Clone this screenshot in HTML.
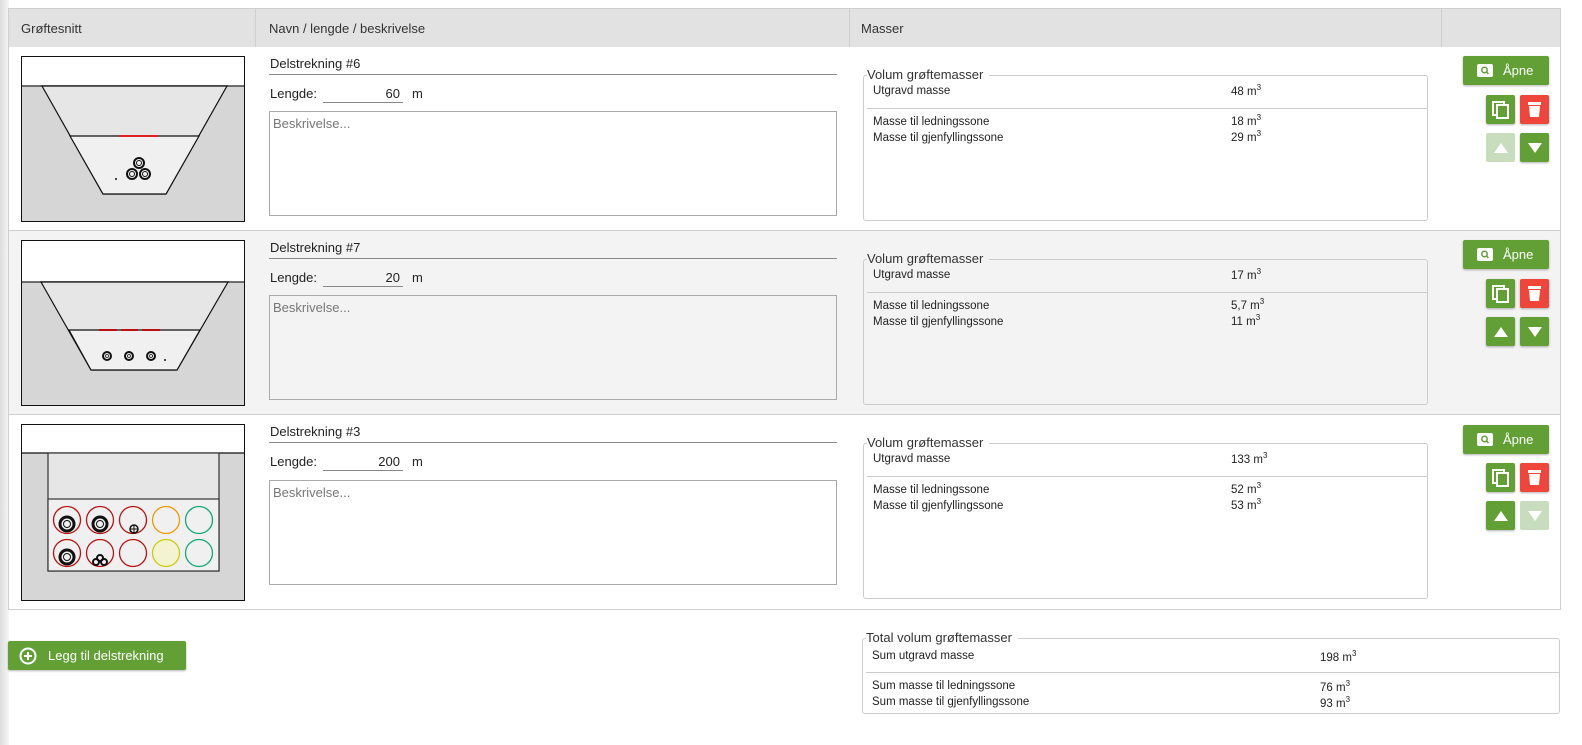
<!DOCTYPE html>
<html><head><meta charset="utf-8">
<style>
*{box-sizing:border-box;margin:0;padding:0}
body{width:1582px;height:745px;position:relative;background:#fff;font-family:"Liberation Sans",sans-serif;color:#222;overflow:hidden}
.strip{position:absolute;left:0;top:0;width:9px;height:745px;background:linear-gradient(to right,#ddd,#f6f6f6)}
.a{position:absolute}
.hdr{left:8px;top:8px;width:1553px;height:40px;background:#e2e2e2;border:1px solid #cfcfcf}
.hdr span{position:absolute;top:12px;font-size:13px;color:#333}
.vl{position:absolute;top:0;width:1px;height:38px;background:#cfcfcf}
.row{position:absolute;left:8px;width:1553px;border-left:1px solid #cfcfcf;border-right:1px solid #cfcfcf;border-bottom:1px solid #cfcfcf}
.img{position:absolute;left:12px;width:224px;border:1px solid #111;background:#d6d6d6;overflow:hidden}
.name{position:absolute;left:260px;width:568px;height:19px;border-bottom:1px solid #888;font-size:13px;color:#222;padding-left:1px}
.lab{position:absolute;left:261px;font-size:13px}
.len{position:absolute;left:314px;width:80px;height:17px;border-bottom:1px solid #888;font-size:13px;text-align:right;padding-right:3px}
.m{position:absolute;left:403px;font-size:13px}
.ta{position:absolute;left:260px;width:568px;border:1px solid #aaa;background:inherit;font-size:13px;color:#777;padding:4px 3px}
.fs{position:absolute;left:854px;width:565px;border:1px solid #ccc;border-radius:3px}
.fs .lg{position:absolute;left:3px;top:-9px;font-size:13px;color:#333;background:inherit;padding-right:6px}
.fs .t{position:absolute;left:9px;font-size:11.5px}
.fs .v{position:absolute;font-size:11.5px}
.fs .hr{position:absolute;left:3px;right:0;height:1px;background:#ccc}
sup{font-size:8px;vertical-align:top;position:relative;top:-3px}
.btn{position:absolute;background:#62a035;border-radius:2px;box-shadow:0 1px 2px rgba(0,0,0,.3)}
.open{left:1454px;width:86px;height:29px;color:#fff;font-size:13px}
.open .q{position:absolute;left:14px;top:8px;width:16px;height:13px;background:#fff;border-radius:2px}
.open span{position:absolute;left:40px;top:7px}
.sq{width:29px;height:29px}
.red{background:#f0453a}
.dis{background:#c8ddbd;box-shadow:none}
.tri-u{position:absolute;left:8px;top:10px;border-left:7px solid transparent;border-right:7px solid transparent;border-bottom:10px solid #fff}
.tri-d{position:absolute;left:8px;top:10px;border-left:7px solid transparent;border-right:7px solid transparent;border-top:10px solid #fff}
</style></head><body>
<div class="strip"></div>
<div class="a hdr">
<span style="left:12px">Grøftesnitt</span><div class="vl" style="left:246px"></div>
<span style="left:260px">Navn / lengde / beskrivelse</span><div class="vl" style="left:840px"></div>
<span style="left:852px">Masser</span><div class="vl" style="left:1432px"></div>
</div>

<!-- Row 1 -->
<div class="row" style="top:47px;height:184px;background:#fff">
<div class="img" style="top:9px;height:166px">
<svg width="224" height="166" viewBox="0 0 224 166">
<rect x="0" y="0" width="224" height="29" fill="#fff"/>
<line x1="0" y1="29" x2="224" y2="29" stroke="#444" stroke-width="1.5"/>
<polygon points="20,29 205,29 144,137 81,137" fill="#e6e6e6" stroke="#111" stroke-width="1.2"/>
<polygon points="48,79 177,79 144,137 81,137" fill="#f0f0f0" stroke="#111" stroke-width="1.2"/>
<line x1="97" y1="79" x2="136" y2="79" stroke="#d22" stroke-width="2"/>
<g fill="none" stroke="#111" stroke-width="2"><circle cx="117" cy="106" r="5"/><circle cx="110" cy="117" r="5"/><circle cx="123" cy="117" r="5"/></g>
<g fill="none" stroke="#111" stroke-width="1"><circle cx="117" cy="106" r="2.5"/><circle cx="110" cy="117" r="2.5"/><circle cx="123" cy="117" r="2.5"/></g>
<circle cx="94" cy="122" r="1" fill="#111"/>
</svg></div>
<div class="name" style="top:9px">Delstrekning #6</div>
<div class="lab" style="top:39px">Lengde:</div><div class="len" style="top:39px">60</div><div class="m" style="top:39px">m</div>
<div class="ta" style="top:64px;height:105px;background:#fff">Beskrivelse...</div>
<div class="fs" style="top:28px;height:146px;background:#fff"><div class="lg">Volum grøftemasser</div>
<div class="t" style="top:9px">Utgravd masse</div><div class="v" style="left:367px;top:10px">48 m<sup>3</sup></div>
<div class="hr" style="top:32px"></div>
<div class="t" style="top:40px">Masse til ledningssone</div><div class="v" style="left:367px;top:40px">18 m<sup>3</sup></div>
<div class="t" style="top:56px">Masse til gjenfyllingssone</div><div class="v" style="left:367px;top:56px">29 m<sup>3</sup></div>
</div>
<div class="btn open" style="top:9px"><div class="q"><svg width="16" height="13"><circle cx="7.5" cy="6" r="2.7" fill="none" stroke="#62a035" stroke-width="1.5"/><path d="M9.5 8l2 2" stroke="#62a035" stroke-width="1.5"/></svg></div><span>Åpne</span></div>
<div class="btn sq" style="left:1477px;top:48px"><svg width="29" height="29"><rect x="7" y="7" width="11" height="13" fill="none" stroke="#fff" stroke-width="2"/><rect x="11" y="10" width="11" height="13" fill="#62a035" stroke="#fff" stroke-width="2"/></svg></div>
<div class="btn sq red" style="left:1511px;top:48px"><svg width="29" height="29"><rect x="8" y="7" width="13" height="3" fill="#fff"/><path d="M9 11h11l-1 11h-9z" fill="#fff"/></svg></div>
<div class="btn sq dis" style="left:1477px;top:86px"><div class="tri-u"></div></div>
<div class="btn sq" style="left:1511px;top:86px"><div class="tri-d"></div></div>
</div>

<!-- Row 2 -->
<div class="row" style="top:231px;height:184px;background:#f3f3f3">
<div class="img" style="top:9px;height:166px">
<svg width="224" height="166" viewBox="0 0 224 166">
<rect x="0" y="0" width="224" height="41" fill="#fff"/>
<line x1="0" y1="41" x2="224" y2="41" stroke="#444" stroke-width="1.5"/>
<polygon points="19,41 206,41 155,129 69,129" fill="#e6e6e6" stroke="#111" stroke-width="1.2"/>
<polygon points="47,89 178,89 155,129 69,129" fill="#f0f0f0" stroke="#111" stroke-width="1.2"/>
<g stroke="#b11" stroke-width="2"><line x1="77" y1="89" x2="95" y2="89"/><line x1="99" y1="89" x2="116" y2="89"/><line x1="120" y1="89" x2="138" y2="89"/></g>
<g fill="none" stroke="#111" stroke-width="2"><circle cx="85" cy="115" r="4"/><circle cx="107" cy="115" r="4"/><circle cx="129" cy="115" r="4"/></g>
<g fill="none" stroke="#111" stroke-width="0.8"><circle cx="85" cy="115" r="1.5"/><circle cx="107" cy="115" r="1.5"/><circle cx="129" cy="115" r="1.5"/></g>
<circle cx="143" cy="119" r="1" fill="#111"/>
</svg></div>
<div class="name" style="top:9px">Delstrekning #7</div>
<div class="lab" style="top:39px">Lengde:</div><div class="len" style="top:39px">20</div><div class="m" style="top:39px">m</div>
<div class="ta" style="top:64px;height:105px;background:#f3f3f3">Beskrivelse...</div>
<div class="fs" style="top:28px;height:146px;background:#f3f3f3"><div class="lg">Volum grøftemasser</div>
<div class="t" style="top:9px">Utgravd masse</div><div class="v" style="left:367px;top:10px">17 m<sup>3</sup></div>
<div class="hr" style="top:32px"></div>
<div class="t" style="top:40px">Masse til ledningssone</div><div class="v" style="left:367px;top:40px">5,7 m<sup>3</sup></div>
<div class="t" style="top:56px">Masse til gjenfyllingssone</div><div class="v" style="left:367px;top:56px">11 m<sup>3</sup></div>
</div>
<div class="btn open" style="top:9px"><div class="q"><svg width="16" height="13"><circle cx="7.5" cy="6" r="2.7" fill="none" stroke="#62a035" stroke-width="1.5"/><path d="M9.5 8l2 2" stroke="#62a035" stroke-width="1.5"/></svg></div><span>Åpne</span></div>
<div class="btn sq" style="left:1477px;top:48px"><svg width="29" height="29"><rect x="7" y="7" width="11" height="13" fill="none" stroke="#fff" stroke-width="2"/><rect x="11" y="10" width="11" height="13" fill="#62a035" stroke="#fff" stroke-width="2"/></svg></div>
<div class="btn sq red" style="left:1511px;top:48px"><svg width="29" height="29"><rect x="8" y="7" width="13" height="3" fill="#fff"/><path d="M9 11h11l-1 11h-9z" fill="#fff"/></svg></div>
<div class="btn sq" style="left:1477px;top:86px"><div class="tri-u"></div></div>
<div class="btn sq" style="left:1511px;top:86px"><div class="tri-d"></div></div>
</div>

<!-- Row 3 -->
<div class="row" style="top:415px;height:195px;background:#fff">
<div class="img" style="top:9px;height:177px">
<svg width="224" height="177" viewBox="0 0 224 177">
<rect x="0" y="0" width="224" height="28" fill="#fff"/>
<line x1="0" y1="28" x2="224" y2="28" stroke="#111" stroke-width="1.2"/>
<rect x="26" y="28" width="171" height="118" fill="#e6e6e6" stroke="#333" stroke-width="1.2"/>
<rect x="26" y="74" width="171" height="72" fill="#f0f0f0" stroke="#333" stroke-width="1.2"/>
<g fill="none" stroke-width="1.3">
<circle cx="45" cy="95" r="13.5" stroke="#b11"/><circle cx="78" cy="95" r="13.5" stroke="#b11"/><circle cx="111" cy="95" r="13.5" stroke="#b11"/><circle cx="144" cy="95" r="13.5" stroke="#e90"/><circle cx="177" cy="95" r="13.5" stroke="#1a7"/>
<circle cx="45" cy="128" r="13.5" stroke="#b11"/><circle cx="78" cy="128" r="13.5" stroke="#b11"/><circle cx="111" cy="128" r="13.5" stroke="#b11"/><circle cx="144" cy="128" r="13.5" stroke="#cc1" fill="#f3f3d0"/><circle cx="177" cy="128" r="13.5" stroke="#1a7"/>
</g>
<g fill="none" stroke="#111"><circle cx="45" cy="99" r="7" stroke-width="3"/><circle cx="45" cy="99" r="3.5"/><circle cx="78" cy="99" r="7" stroke-width="3"/><circle cx="78" cy="99" r="3.5"/><circle cx="45" cy="132" r="7" stroke-width="3"/><circle cx="45" cy="132" r="3.5"/>
<circle cx="112" cy="104" r="4" stroke-width="1.5"/><path d="M108 104h8M112 100v8"/>
<circle cx="78" cy="133" r="3" stroke-width="2"/><circle cx="74" cy="137" r="3" stroke-width="2"/><circle cx="82" cy="137" r="3" stroke-width="2"/></g>
</svg></div>
<div class="name" style="top:9px">Delstrekning #3</div>
<div class="lab" style="top:39px">Lengde:</div><div class="len" style="top:39px">200</div><div class="m" style="top:39px">m</div>
<div class="ta" style="top:65px;height:105px;background:#fff">Beskrivelse...</div>
<div class="fs" style="top:28px;height:156px;background:#fff"><div class="lg">Volum grøftemasser</div>
<div class="t" style="top:9px">Utgravd masse</div><div class="v" style="left:367px;top:10px">133 m<sup>3</sup></div>
<div class="hr" style="top:32px"></div>
<div class="t" style="top:40px">Masse til ledningssone</div><div class="v" style="left:367px;top:40px">52 m<sup>3</sup></div>
<div class="t" style="top:56px">Masse til gjenfyllingssone</div><div class="v" style="left:367px;top:56px">53 m<sup>3</sup></div>
</div>
<div class="btn open" style="top:10px"><div class="q"><svg width="16" height="13"><circle cx="7.5" cy="6" r="2.7" fill="none" stroke="#62a035" stroke-width="1.5"/><path d="M9.5 8l2 2" stroke="#62a035" stroke-width="1.5"/></svg></div><span>Åpne</span></div>
<div class="btn sq" style="left:1477px;top:48px"><svg width="29" height="29"><rect x="7" y="7" width="11" height="13" fill="none" stroke="#fff" stroke-width="2"/><rect x="11" y="10" width="11" height="13" fill="#62a035" stroke="#fff" stroke-width="2"/></svg></div>
<div class="btn sq red" style="left:1511px;top:48px"><svg width="29" height="29"><rect x="8" y="7" width="13" height="3" fill="#fff"/><path d="M9 11h11l-1 11h-9z" fill="#fff"/></svg></div>
<div class="btn sq" style="left:1477px;top:86px"><div class="tri-u"></div></div>
<div class="btn sq dis" style="left:1511px;top:86px"><div class="tri-d"></div></div>
</div>

<!-- Bottom -->
<div class="btn" style="left:8px;top:641px;width:178px;height:29px;color:#fff;font-size:13px">
<svg class="a" style="left:11px;top:6px" width="18" height="18"><circle cx="9" cy="9" r="7.5" fill="none" stroke="#fff" stroke-width="2"/><path d="M9 5v8M5 9h8" stroke="#fff" stroke-width="2"/></svg>
<span class="a" style="left:40px;top:7px">Legg til delstrekning</span></div>

<div class="fs" style="left:862px;top:638px;width:698px;height:76px;background:#fff"><div class="lg">Total volum grøftemasser</div>
<div class="t" style="top:11px">Sum utgravd masse</div><div class="v" style="left:457px;top:13px">198 m<sup>3</sup></div>
<div class="hr" style="top:33px"></div>
<div class="t" style="top:41px">Sum masse til ledningssone</div><div class="v" style="left:457px;top:43px">76 m<sup>3</sup></div>
<div class="t" style="top:57px">Sum masse til gjenfyllingssone</div><div class="v" style="left:457px;top:59px">93 m<sup>3</sup></div>
</div>
</body></html>
